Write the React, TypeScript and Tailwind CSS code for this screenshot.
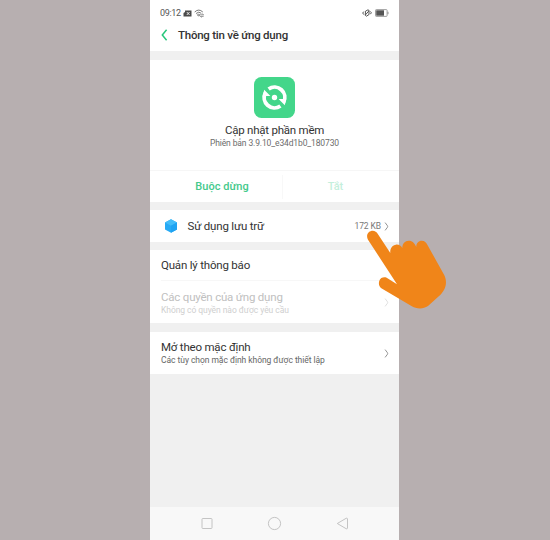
import React from "react";

function Chevron({ className }: { className: string }) {
  return (
    <svg width="5" height="9" viewBox="0 0 5 9" className={className} fill="none" stroke="currentColor" strokeWidth="0.9">
      <path d="M1.1 0.6L3.5 3.8Q3.9 4.5 3.5 5.2L1.1 8.4" />
    </svg>
  );
}

function StatusBar() {
  return (
    <div className="flex h-[26px] items-center pl-[10px] pr-[10px] text-[#555]">
      <span className="text-[9px] leading-[10px] tracking-[-0.35px] w-[23px] whitespace-nowrap">09:12</span>
      <svg width="9" height="7" viewBox="0 0 9 7">
        <path d="M2 0.5H8.5V6.5H0.5V3L2 2Z" fill="#4b4b4b" />
        <path d="M3.8 2L6.6 5M6.6 2L3.8 5" stroke="#fff" strokeWidth="0.8" />
      </svg>
      <svg width="11" height="9" viewBox="0 0 11 9" className="ml-[2px]" fill="none" stroke="#666" strokeWidth="0.9">
        <path d="M0.7 3Q4.7 -0.8 8.8 3M2.1 4.5Q4.7 2 7.3 4.3M3.4 5.8Q4.7 4.7 5.8 5.8L4.7 7.2Z" />
        <path d="M6.2 5.8H9.6L8.4 4.7M9.6 7.4H6.4L7.6 8.4" strokeWidth="0.7" />
      </svg>
      <svg width="10" height="8" viewBox="0 0 10 8" className="ml-auto" fill="none" stroke="#555" strokeWidth="1">
        <path d="M3.5 2.2L6 0.8L7 1.5V5.5L4.5 7.2L3.3 6.4Z M3.3 6L7 1.8" />
        <path d="M1.8 2.6L0.7 4L1.8 5.6M8.3 2.4L9.4 3.8L8.3 5.2" />
      </svg>
      <svg width="14" height="8" viewBox="0 0 14 8" className="ml-[3px]">
        <rect x="0.5" y="0.6" width="11.6" height="6.8" rx="0.8" fill="#fff" stroke="#888" strokeWidth="0.8" />
        <rect x="1.2" y="1.3" width="7.8" height="5.4" fill="#555" />
        <path d="M13 2.8V5.2" stroke="#888" strokeWidth="0.9" />
      </svg>
    </div>
  );
}

function Header() {
  return (
    <div className="flex h-[25px] items-start pl-[11px]">
      <svg width="7" height="12" viewBox="0 0 7 12" className="mt-[3px]" fill="none" stroke="#27c77b" strokeWidth="1.5">
        <path d="M5.6 0.8L1.3 6L5.6 11.2" />
      </svg>
      <h1 className="ml-[10px] mt-[2px] text-[11.5px] font-medium leading-[14px] tracking-[-0.24px] text-[#333] whitespace-nowrap">Thông tin về ứng dụng</h1>
    </div>
  );
}

function AppCard() {
  return (
    <section className="flex h-[142px] flex-col bg-white">
      <div className="flex h-[111px] flex-col items-center border-b border-[#f6f6f6] pt-[17px]">
        <svg width="41" height="41" viewBox="0 0 41 41">
          <rect width="41" height="41" rx="7.5" fill="#43d68a" />
          <g fill="none" stroke="#fff" strokeWidth="3.8">
            <path d="M14.6 12A10.3 10.3 0 0 1 29.6 25.3" />
            <path d="M26.4 29A10.3 10.3 0 0 1 11.4 15.7" />
          </g>
          <path d="M8.9 19L10.2 12.8L16.4 19Z M32.1 22L30.8 28.2L24.6 22Z" fill="#fff" />
          <circle cx="20.5" cy="20.5" r="2.7" fill="#fff" />
        </svg>
        <div className="mt-[5px] text-[11.5px] leading-[14px] tracking-[-0.23px] text-[#333] whitespace-nowrap">Cập nhật phần mềm</div>
        <div className="text-[8.5px] leading-[12px] tracking-[-0.12px] text-[#6c6c6c] whitespace-nowrap">Phiên bản 3.9.10_e34d1b0_180730</div>
      </div>
      <div className="flex h-[31px] items-center text-[11px] font-medium leading-[14px]">
        <button className="w-[132px] pl-[12px] text-center tracking-[0.05px] text-[#45c98b]">Buộc dừng</button>
        <span className="h-[24px] w-px bg-[#f8f8f8]" />
        <button className="w-[105px] text-center text-[#c5efdc]">Tắt</button>
      </div>
    </section>
  );
}

function NavBar() {
  return (
    <nav className="mt-auto h-[33px] bg-[#f8f8f8]">
      <svg width="249" height="33" viewBox="0 0 249 33" fill="none" stroke="#bdbdbd" strokeWidth="0.9">
        <rect x="52" y="11.5" width="10" height="10" rx="0.8" />
        <circle cx="124.5" cy="16.5" r="6.1" />
        <path d="M187.3 16.5L196.3 11.2Q197.5 11 197.5 12V21Q197.5 22 196.3 21.8Z" />
      </svg>
    </nav>
  );
}

export default function App() {
  return (
    <main className="relative flex h-[540px] w-[550px] justify-center overflow-hidden bg-[#b7afb0] pr-px font-['Roboto','Noto_Sans',sans-serif]">
      <div className="flex h-full w-[249px] flex-col bg-[#f0f0f0]">
        <header className="h-[51px] bg-white">
          <StatusBar />
          <Header />
        </header>
        <div className="h-[9px] shrink-0" />
        <AppCard />
        <section className="mt-[8px] flex h-[32px] items-center bg-white pl-[14px] pr-[10px]">
          <svg width="14" height="14" viewBox="0 0 14 14">
            <path d="M7 0.3L13 3.5V10.5L7 13.7L1 10.5V3.5Z" fill="#27aaf5" />
            <path d="M7 0.3L13 3.5L7 6.7L1 3.5Z" fill="#43bdf9" />
            <path d="M7 6.7L13 3.5V10.5L7 13.7Z" fill="#1fa3f2" />
          </svg>
          <span className="ml-[9.5px] text-[11.5px] leading-[14px] tracking-[-0.18px] text-[#333] whitespace-nowrap">Sử dụng lưu trữ</span>
          <span className="ml-auto text-[8.5px] leading-[12px] tracking-[-0.1px] text-[#777] whitespace-nowrap">172 KB</span>
          <Chevron className="ml-[3px] text-[#888]" />
        </section>
        <section className="mt-[8px] h-[73px] bg-white">
          <div className="ml-[11px] flex h-[31px] items-center border-b border-[#f7f7f7] text-[11.5px] leading-[14px] tracking-[-0.2px] text-[#333] whitespace-nowrap">Quản lý thông báo</div>
          <div className="flex h-[42px] items-center justify-between pl-[11px] pr-[10px]">
            <div className="pt-px whitespace-nowrap">
              <div className="text-[11.5px] leading-[14px] tracking-[-0.2px] text-[#c0c0c0]">Các quyền của ứng dụng</div>
              <div className="text-[8.5px] leading-[12px] tracking-[-0.06px] text-[#cfcfcf]">Không có quyền nào được yêu cầu</div>
            </div>
            <Chevron className="text-[#ddd]" />
          </div>
        </section>
        <section className="mt-[9px] flex h-[42px] items-center justify-between bg-white pl-[11px] pr-[10px]">
          <div className="whitespace-nowrap">
            <div className="text-[11.5px] leading-[14px] tracking-[-0.2px] text-[#333]">Mở theo mặc định</div>
            <div className="text-[8.5px] leading-[12px] tracking-[-0.05px] text-[#666]">Các tùy chọn mặc định không được thiết lập</div>
          </div>
          <Chevron className="text-[#888]" />
        </section>
        <NavBar />
      </div>
      <svg className="absolute left-[360px] top-[225px]" width="90" height="90" viewBox="60 60 270 270">
        <path
          fill="#f08519"
          d="M84 104C76 88 87 77 98 77C105 77 110 81 113 86L151 144C149 131 157 120 168 119C177 118 183 123 187 129C187 116 195 107 206 107C218 107 224 115 229 126C228 116 235 107 245 107C254 107 259 113 262 119L313 211C320 226 320 243 310 258L303 268L264 303C248 314 229 312 213 302L124 250C117 245 115 236 118 227C121 218 131 215 140 218L171 238Z"
        />
      </svg>
    </main>
  );
}
